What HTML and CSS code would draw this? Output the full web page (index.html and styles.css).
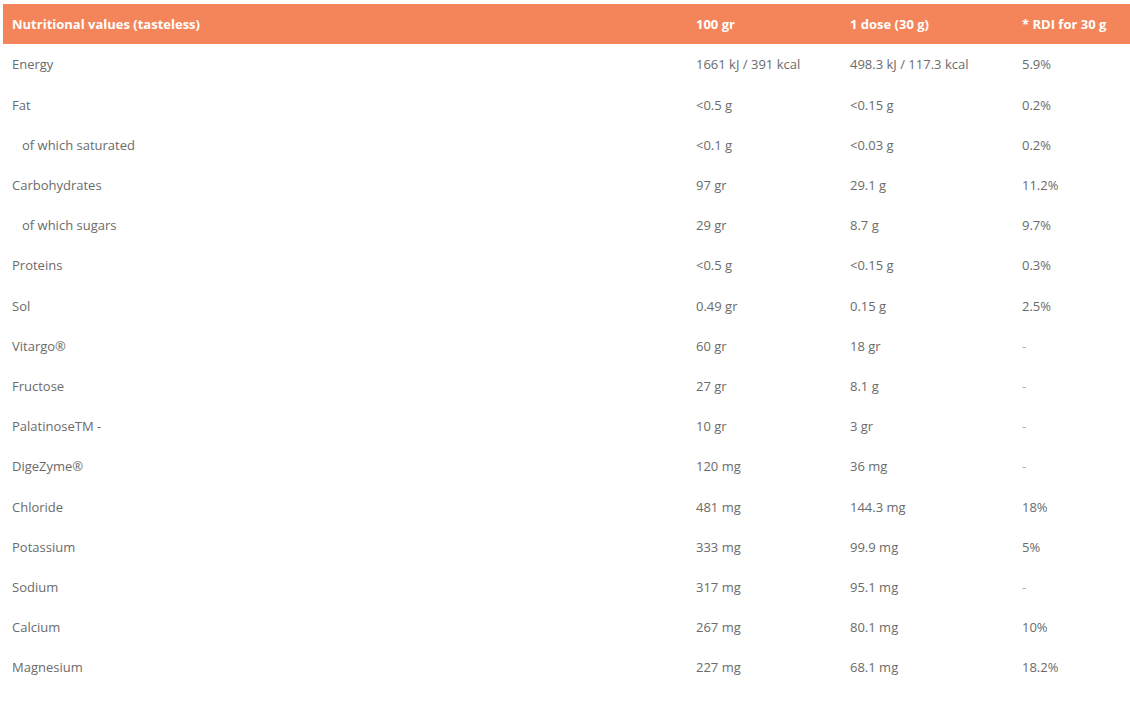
FILE: index.html
```html
<!DOCTYPE html>
<html>
<head>
<meta charset="utf-8">
<link rel="stylesheet" href="styles.css">
</head>
<body>
<div class="page">
  <div class="table">
    <div class="row head">
      <div class="cell">Nutritional values (tasteless)</div>
      <div class="cell">100 gr</div>
      <div class="cell">1 dose (30 g)</div>
      <div class="cell">* RDI for 30 g</div>
    </div>
    <div class="row"><div class="cell">Energy</div><div class="cell">1661 kJ / 391 kcal</div><div class="cell">498.3 kJ / 117.3 kcal</div><div class="cell">5.9%</div></div>
    <div class="row"><div class="cell">Fat</div><div class="cell">&lt;0.5 g</div><div class="cell">&lt;0.15 g</div><div class="cell">0.2%</div></div>
    <div class="row"><div class="cell sub">of which saturated</div><div class="cell">&lt;0.1 g</div><div class="cell">&lt;0.03 g</div><div class="cell">0.2%</div></div>
    <div class="row"><div class="cell">Carbohydrates</div><div class="cell">97 gr</div><div class="cell">29.1 g</div><div class="cell">11.2%</div></div>
    <div class="row"><div class="cell sub">of which sugars</div><div class="cell">29 gr</div><div class="cell">8.7 g</div><div class="cell">9.7%</div></div>
    <div class="row"><div class="cell">Proteins</div><div class="cell">&lt;0.5 g</div><div class="cell">&lt;0.15 g</div><div class="cell">0.3%</div></div>
    <div class="row"><div class="cell">Sol</div><div class="cell">0.49 gr</div><div class="cell">0.15 g</div><div class="cell">2.5%</div></div>
    <div class="row"><div class="cell">Vitargo®</div><div class="cell">60 gr</div><div class="cell">18 gr</div><div class="cell dash">-</div></div>
    <div class="row"><div class="cell">Fructose</div><div class="cell">27 gr</div><div class="cell">8.1 g</div><div class="cell dash">-</div></div>
    <div class="row"><div class="cell">PalatinoseTM -</div><div class="cell">10 gr</div><div class="cell">3 gr</div><div class="cell dash">-</div></div>
    <div class="row"><div class="cell">DigeZyme®</div><div class="cell">120 mg</div><div class="cell">36 mg</div><div class="cell dash">-</div></div>
    <div class="row"><div class="cell">Chloride</div><div class="cell">481 mg</div><div class="cell">144.3 mg</div><div class="cell">18%</div></div>
    <div class="row"><div class="cell">Potassium</div><div class="cell">333 mg</div><div class="cell">99.9 mg</div><div class="cell">5%</div></div>
    <div class="row"><div class="cell">Sodium</div><div class="cell">317 mg</div><div class="cell">95.1 mg</div><div class="cell dash">-</div></div>
    <div class="row"><div class="cell">Calcium</div><div class="cell">267 mg</div><div class="cell">80.1 mg</div><div class="cell">10%</div></div>
    <div class="row"><div class="cell">Magnesium</div><div class="cell">227 mg</div><div class="cell">68.1 mg</div><div class="cell">18.2%</div></div>
  </div>
</div>
</body>
</html>
```
FILE: styles.css
```css
html, body {
  margin: 0;
  padding: 0;
  background: #ffffff;
  overflow: hidden;
}
.page {
  padding: 4px 0 0 3px;
  font-family: "Open Sans", "Liberation Sans", sans-serif;
  font-size: 13px;
  color: #6b6b6b;
}
.table {
  width: 1140px;
}
.row {
  display: grid;
  grid-template-columns: 684px 154px 172px 1fr;
  height: 40.2px;
  align-items: center;
}
.row.head {
  height: 40.4px;
  background: #f4855a;
  color: #ffffff;
  font-weight: 700;
}
.cell {
  padding-left: 9px;
  white-space: nowrap;
}
.cell.sub {
  padding-left: 19px;
}
.cell.dash {
  color: #aaaaaa;
}
```
